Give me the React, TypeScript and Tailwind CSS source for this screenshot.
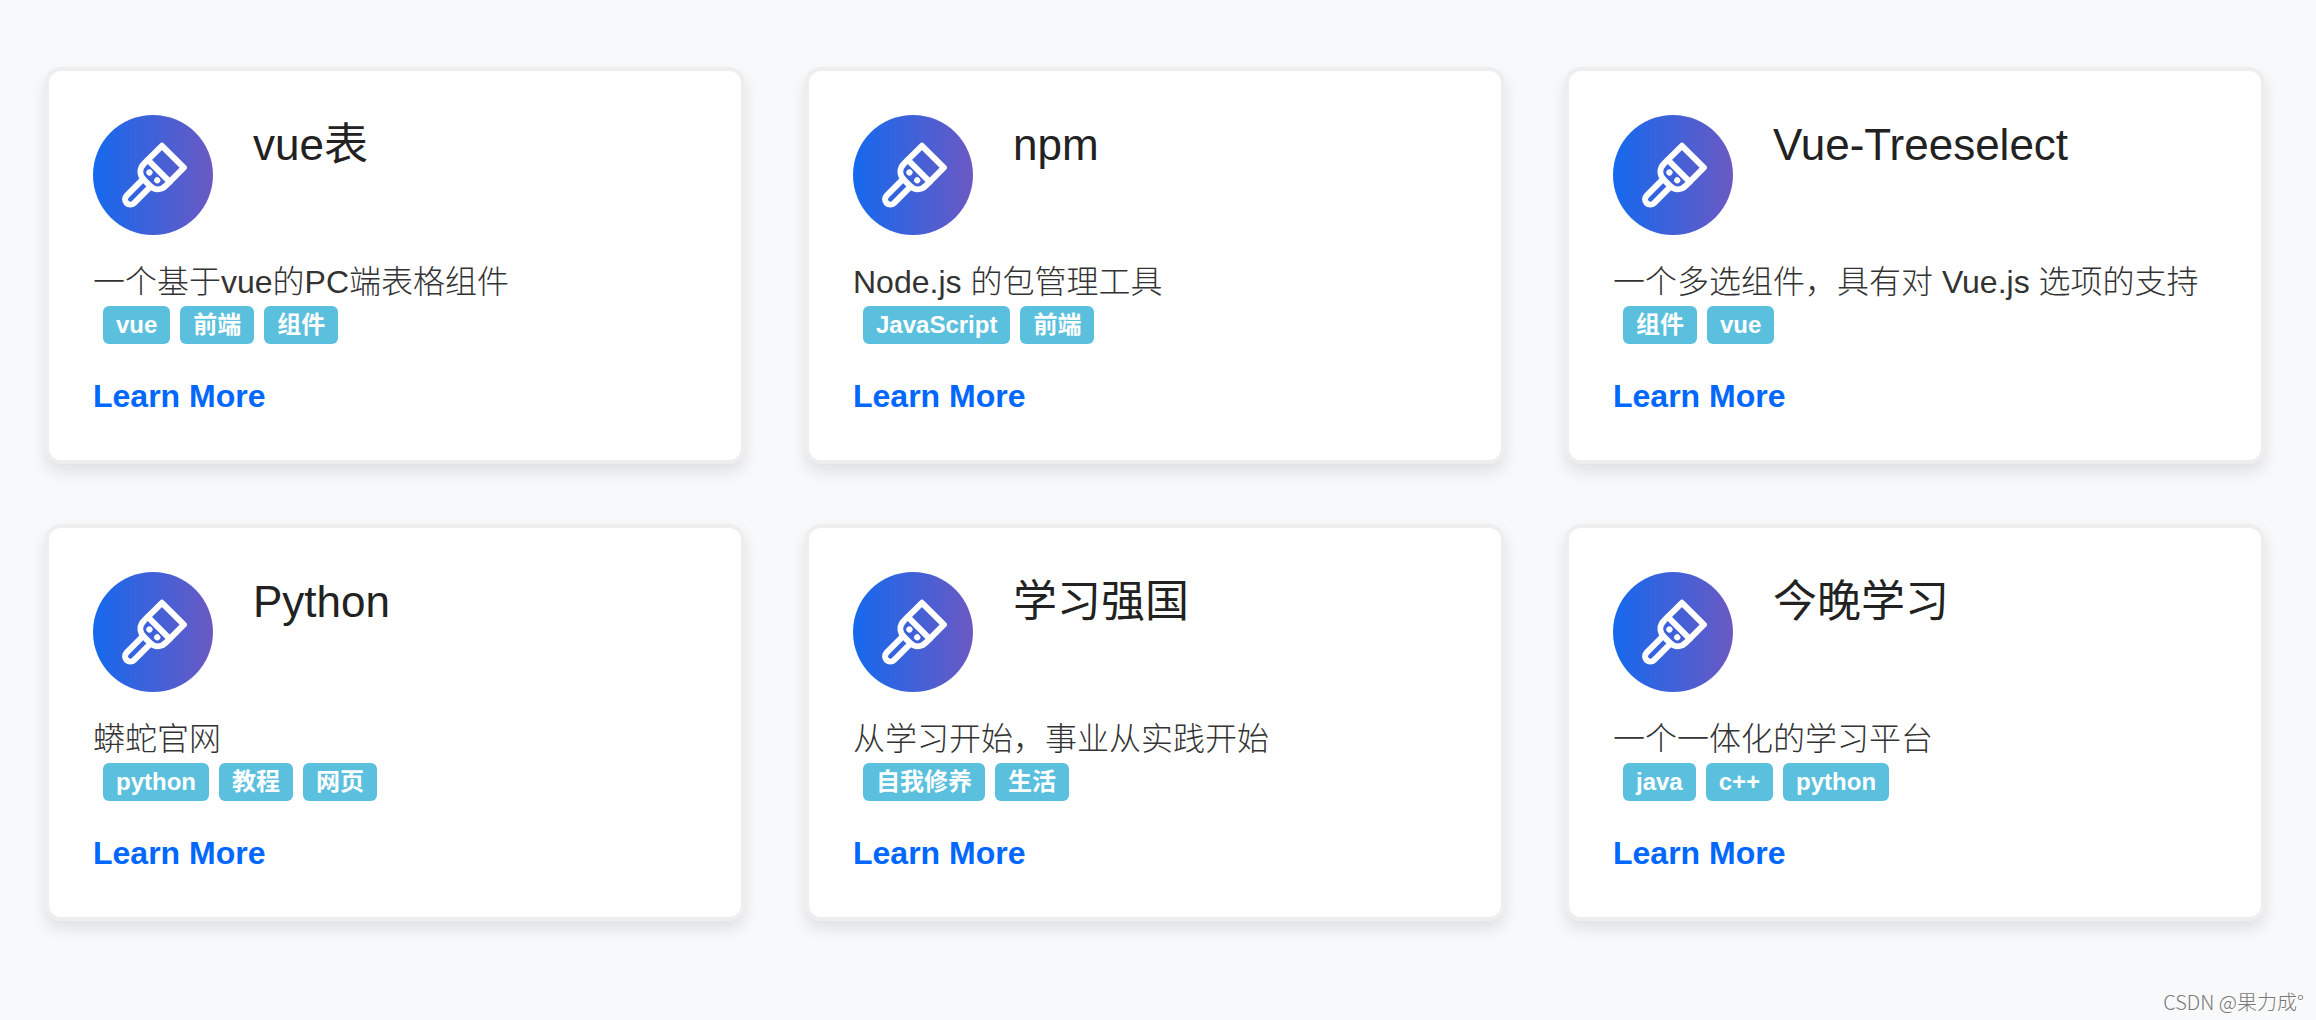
interface Site {
  title: string;
  description: string;
  tags: string[];
}

const sites: Site[] = [
  { title: 'vue表', description: '一个基于vue的PC端表格组件', tags: ['vue', '前端', '组件'] },
  { title: 'npm', description: 'Node.js 的包管理工具', tags: ['JavaScript', '前端'] },
  { title: 'Vue-Treeselect', description: '一个多选组件，具有对 Vue.js 选项的支持', tags: ['组件', 'vue'] },
  { title: 'Python', description: '蟒蛇官网', tags: ['python', '教程', '网页'] },
  { title: '学习强国', description: '从学习开始，事业从实践开始', tags: ['自我修养', '生活'] },
  { title: '今晚学习', description: '一个一体化的学习平台', tags: ['java', 'c++', 'python'] }
];

function BrushIcon() {
  return (
    <svg viewBox="0 0 120 120" className="size-full" fill="none" aria-hidden="true">
      <g transform="rotate(45)" stroke="white" strokeWidth="6" strokeLinejoin="round" strokeLinecap="round">
        {/* head */}
        <path d="M70.5 -27H101.5V-2C101.5 5 97 9.8 90 9.8H82C75 9.8 70.5 5 70.5 -2Z" />
        <path d="M70.5 -7H101.5" />
        {/* handle */}
        <path d="M80.7 10V33.2A5.3 5.3 0 0 0 91.3 33.2V10" />
        <circle cx="80.6" cy="0.8" r="3.1" fill="white" stroke="none" />
        <circle cx="91.6" cy="0.8" r="3.1" fill="white" stroke="none" />
      </g>
    </svg>
  );
}

function SiteCard({ site }: { site: Site }) {
  return (
    <article className="rounded-2xl border-4 border-[#eeeeee] bg-white p-11 shadow-[0_8px_16px_rgba(0,0,0,0.1)]">
      <div className="flex gap-10">
        <div className="size-[120px] shrink-0 rounded-full bg-[linear-gradient(to_right,#1569ee,#6b59c3)]">
          <BrushIcon />
        </div>
        <h2 className="text-[44px] leading-[60px] text-[#222222]">{site.title}</h2>
      </div>
      <p className="mt-[23px] text-[32px] leading-[48px] font-light text-[#333333]">{site.description}</p>
      <ul className="ml-[10px] flex flex-wrap gap-[10px]">
        {site.tags.map((tag) => (
          <li key={tag} className="rounded-md bg-[#5bc0de] px-[13px] text-2xl leading-[38px] font-bold text-white">
            {tag}
          </li>
        ))}
      </ul>
      <a href="#" className="mt-8 block w-fit text-[32px] leading-[40px] font-bold text-[#0067ff]">
        Learn More
      </a>
    </article>
  );
}

export default function App() {
  return (
    <div className="flex min-h-screen flex-col bg-[#f8f9fb] font-['Liberation_Sans','Noto_Sans_CJK_SC',sans-serif]">
      <main className="grid grid-cols-1 gap-[60px] pt-[67px] pr-[51px] pl-[45px] md:grid-cols-2 xl:grid-cols-3">
        {sites.map((site) => (
          <SiteCard key={site.title} site={site} />
        ))}
      </main>
      <footer className="mt-auto pr-3 pb-1 text-right font-['Noto_Sans_CJK_SC',sans-serif] text-xl leading-7 font-light text-[#777777] [text-shadow:1px_1px_0_#ffffff]">
        CSDN @果力成°
      </footer>
    </div>
  );
}
